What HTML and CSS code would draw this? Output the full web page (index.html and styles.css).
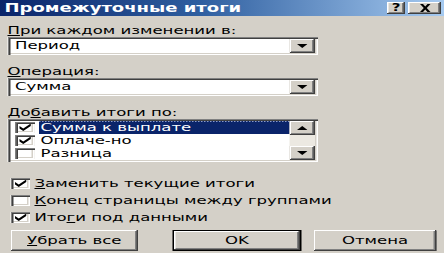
FILE: index.html
```html
<!DOCTYPE html>
<html lang="ru">

<head>
    <meta charset="UTF-8">
    <meta name="viewport" content="width=device-width, initial-scale=1.0">
    <title>Промежуточные итоги</title>
    <link rel="stylesheet" href="styles.css">
</head>

<body>

    <div class="dialog">
        <div class="titlebar">
            <span class="title">Промежуточные итоги</span>
            <span class="tbtn help">?</span>
            <span class="tbtn close">
                <svg width="9" height="8" viewBox="0 0 9 8"><path d="M1 0h2l1.5 2.5L6 0h2L5.5 4 8 8H6L4.5 5.5 3 8H1l2.5-4z" fill="#000"/></svg>
            </span>
        </div>

        <div class="content">
            <div class="label"><u>П</u>ри каждом изменении в:</div>
            <div class="combo">
                <span class="value">Период</span>
                <span class="dropbtn">
                    <svg width="7" height="4" viewBox="0 0 7 4"><path d="M0 0h7L3.5 4z" fill="#000"/></svg>
                </span>
            </div>

            <div class="label"><u>О</u>перация:</div>
            <div class="combo">
                <span class="value">Сумма</span>
                <span class="dropbtn">
                    <svg width="7" height="4" viewBox="0 0 7 4"><path d="M0 0h7L3.5 4z" fill="#000"/></svg>
                </span>
            </div>

            <div class="label">До<u>б</u>авить итоги по:</div>
            <div class="listbox">
                <div class="items">
                    <div class="item">
                        <span class="check on"></span>
                        <span class="text selected">Сумма к выплате</span>
                    </div>
                    <div class="item">
                        <span class="check on"></span>
                        <span class="text">Оплаче-но</span>
                    </div>
                    <div class="item">
                        <span class="check"></span>
                        <span class="text">Разница</span>
                    </div>
                </div>
                <div class="vscroll">
                    <span class="sbtn">
                        <svg width="7" height="4" viewBox="0 0 7 4"><path d="M0 4h7L3.5 0z" fill="#000"/></svg>
                    </span>
                    <span class="track"></span>
                    <span class="sbtn">
                        <svg width="7" height="4" viewBox="0 0 7 4"><path d="M0 0h7L3.5 4z" fill="#000"/></svg>
                    </span>
                </div>
            </div>

            <div class="options">
                <div class="option"><span class="check on"></span><span><u>З</u>аменить текущие итоги</span></div>
                <div class="option"><span class="check"></span><span><u>К</u>онец страницы между группами</span></div>
                <div class="option"><span class="check on"></span><span>Ито<u>г</u>и под данными</span></div>
            </div>

            <div class="buttons">
                <button class="btn remove"><u>У</u>брать все</button>
                <button class="btn ok">OK</button>
                <button class="btn cancel">Отмена</button>
            </div>
        </div>
    </div>

</body>

</html>
```

FILE: styles.css
```css
body {
    margin: 0;
    padding: 0;
    width: 444px;
    height: 253px;
    overflow: hidden;
    background-color: #d4d0c8;
    font-family: "DejaVu Sans", Verdana, sans-serif;
    font-size: 11px;
    color: #000;
}

/* the screenshot is stretched sideways, so the dialog is too */
.dialog {
    width: 296px;
    height: 253px;
    background-color: #d4d0c8;
    transform: scaleX(1.5);
    transform-origin: 0 0;
}

.titlebar {
    height: 16px;
    display: flex;
    align-items: center;
    padding-left: 3px;
    background: linear-gradient(to right, #0a246a, #2f5fa0 45%, #a6caf0);
}

.title {
    flex: 1;
    color: #fff;
    font-weight: bold;
    font-size: 12px;
    line-height: 16px;
}

.tbtn {
    height: 12px;
    display: flex;
    align-items: center;
    justify-content: center;
    background-color: #d4d0c8;
    box-shadow: inset -1px -1px #404040, inset 1px 1px #fff, inset -2px -2px #808080;
    font-weight: bold;
    font-size: 10px;
    line-height: 12px;
}

.help {
    width: 12px;
    margin-right: 2px;
}

.close {
    width: 22px;
    margin-right: 2px;
}

.content {
    padding: 8px 0 0 5px;
}

.label {
    height: 13px;
    line-height: 13px;
}

.combo {
    width: 207px;
    height: 18px;
    margin-bottom: 10px;
    display: flex;
    align-items: stretch;
    background-color: #fff;
    box-shadow: inset 1px 1px #808080, inset 2px 2px #404040, inset -1px -1px #fff, inset -2px -2px #d4d0c8;
    padding: 2px;
    box-sizing: border-box;
}

.combo .value {
    flex: 1;
    padding-left: 3px;
    line-height: 14px;
}

.dropbtn,
.sbtn {
    width: 17px;
    display: flex;
    align-items: center;
    justify-content: center;
    background-color: #d4d0c8;
    box-shadow: inset -1px -1px #404040, inset 1px 1px #fff, inset -2px -2px #808080;
}

.listbox {
    width: 207px;
    height: 43px;
    margin-bottom: 13px;
    display: flex;
    padding: 2px;
    box-sizing: border-box;
    background-color: #fff;
    box-shadow: inset 1px 1px #808080, inset 2px 2px #404040, inset -1px -1px #fff, inset -2px -2px #d4d0c8;
}

.items {
    flex: 1;
    display: flex;
    flex-direction: column;
}

.item {
    height: 13px;
    display: flex;
    align-items: center;
    padding-left: 3px;
}

.item .text {
    flex: 1;
    margin-left: 3px;
    padding-left: 1px;
    line-height: 13px;
    height: 13px;
    box-sizing: border-box;
}

.item .text.selected {
    background-color: #0a246a;
    color: #fff;
    border-top: 1px dotted #8c9cc8;
    line-height: 12px;
}

.vscroll {
    width: 17px;
    display: flex;
    flex-direction: column;
}

.vscroll .sbtn {
    height: 14px;
}

.track {
    flex: 1;
    background-color: #ece9e2;
}

.check {
    width: 13px;
    height: 11px;
    box-sizing: border-box;
    background-color: #fff;
    box-shadow: inset 1px 1px #808080, inset 2px 2px #404040, inset -1px -1px #fff, inset -2px -2px #d4d0c8;
    display: inline-block;
    flex-shrink: 0;
}

.check.on {
    background: #fff url("data:image/svg+xml,%3Csvg xmlns='http://www.w3.org/2000/svg' width='13' height='11' viewBox='0 0 13 11'%3E%3Cpath d='M3 4l2.5 2.5L10.5 1.5v2.5L5.5 9 3 6.5z' fill='%23000'/%3E%3C/svg%3E") no-repeat;
    box-shadow: inset 1px 1px #808080, inset 2px 2px #404040, inset -1px -1px #fff, inset -2px -2px #d4d0c8;
}

.options {
    display: flex;
    flex-direction: column;
}

.option {
    height: 17px;
    display: flex;
    align-items: center;
    gap: 3px;
    padding-left: 2px;
}

.buttons {
    display: flex;
    margin-top: 4px;
}

.btn {
    height: 21px;
    padding: 0;
    border: none;
    background-color: #d4d0c8;
    font-family: inherit;
    font-size: 11px;
    color: #000;
    box-shadow: inset -1px -1px #404040, inset 1px 1px #fff, inset -2px -2px #808080;
}

.remove {
    width: 85px;
    margin-left: 2px;
}

.ok {
    width: 86px;
    margin-left: 23px;
    border: 1px solid #000;
}

.cancel {
    width: 82px;
    margin-left: 8px;
}
```
